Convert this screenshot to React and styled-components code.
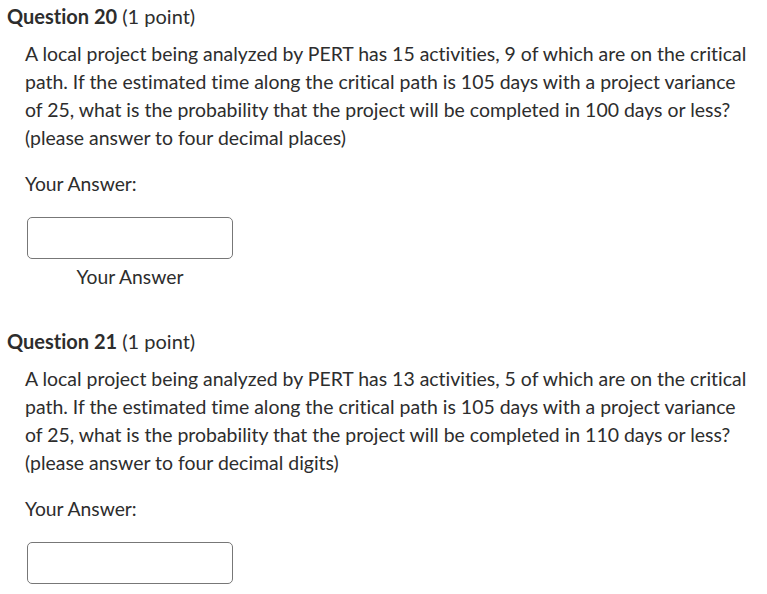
import React from "react";
import styled, { createGlobalStyle } from "styled-components";

const Global = createGlobalStyle`
  html, body { margin: 0; padding: 0; background: #fff; }
  body {
    font-family: Lato, "Noto Sans", sans-serif;
    color: #2d2d2d;
    font-variant-ligatures: none;
    font-feature-settings: "liga" 0, "clig" 0;
  }
`;

const Page = styled.div`
  padding: 2px 0 0 7px;
  display: flex;
  flex-direction: column;
`;

const Question = styled.section`
  display: flex;
  flex-direction: column;
  margin-bottom: ${(p) => p.$gap || 0}px;
`;

const Heading = styled.h2`
  margin: 0;
  font-size: 20px;
  line-height: 28px;
  font-weight: 400;
  color: #2d2d2d;
  b { font-weight: 700; }
`;

const Body = styled.div`
  padding-left: 18px;
  display: flex;
  flex-direction: column;
`;

const Text = styled.p`
  margin: 10px 0 0;
  font-size: 19.45px;
  line-height: 28px;
  width: 727px;
`;

const Label = styled.div`
  margin-top: 18px;
  font-size: 19.3px;
  line-height: 28px;
`;

const AnswerBlock = styled.div`
  margin-top: 19px;
  margin-left: 2px;
  width: 206px;
  display: flex;
  flex-direction: column;
  align-items: center;
`;

const Input = styled.input`
  box-sizing: border-box;
  width: 206px;
  height: 42px;
  border: 1px solid #777;
  border-radius: 5px;
  background: #fff;
  outline: none;
  font-family: inherit;
  font-size: 18px;
`;

const Caption = styled.div`
  margin-top: 4px;
  font-size: 19.3px;
  line-height: 28px;
`;

const questions = [
  {
    num: 20,
    text:
      "A local project being analyzed by PERT has 15 activities, 9 of which are on the critical path. If the estimated time along the critical path is 105 days with a project variance of 25, what is the probability that the project will be completed in 100 days or less? (please answer to four decimal places)",
    caption: true,
    gap: 36,
  },
  {
    num: 21,
    text:
      "A local project being analyzed by PERT has 13 activities, 5 of which are on the critical path. If the estimated time along the critical path is 105 days with a project variance of 25, what is the probability that the project will be completed in 110 days or less? (please answer to four decimal digits)",
    caption: false,
    gap: 0,
  },
];

export default function App() {
  return (
    <>
      <Global />
      <Page>
        {questions.map((q) => (
          <Question key={q.num} $gap={q.gap}>
            <Heading>
              <b>Question {q.num}</b> (1 point)
            </Heading>
            <Body>
              <Text>{q.text}</Text>
              <Label>Your Answer:</Label>
              <AnswerBlock>
                <Input aria-label="Your Answer" />
                {q.caption && <Caption>Your Answer</Caption>}
              </AnswerBlock>
            </Body>
          </Question>
        ))}
      </Page>
    </>
  );
}
